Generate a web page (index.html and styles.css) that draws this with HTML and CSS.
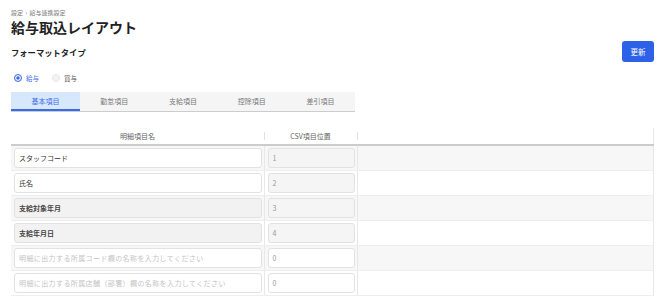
FILE: index.html
```html
<!DOCTYPE html>
<html lang="ja">
<head>
    <meta charset="UTF-8">
    <meta name="viewport" content="width=device-width, initial-scale=1.0">
    <title>給与取込レイアウト</title>
    <link rel="stylesheet" href="styles.css">
</head>
<body>
    <div class="page">
        <!-- Breadcrumb -->
        <div class="breadcrumb">設定 <span class="sep">›</span> 給与連携設定</div>
        <h1 class="page-title">給与取込レイアウト</h1>

        <div class="section-head">
            <h2>フォーマットタイプ</h2>
            <button class="btn-primary">更新</button>
        </div>

        <!-- Format type -->
        <div class="radios">
            <label class="radio checked"><span class="dot"></span>給与</label>
            <label class="radio disabled"><span class="dot"></span>賞与</label>
        </div>

        <!-- Tabs -->
        <div class="tabs">
            <div class="tab active">基本項目</div>
            <div class="tab">勤怠項目</div>
            <div class="tab">支給項目</div>
            <div class="tab">控除項目</div>
            <div class="tab">差引項目</div>
        </div>

        <!-- Layout table -->
        <table class="layout-table">
            <thead>
                <tr>
                    <th class="col-name"><span>明細項目名</span></th>
                    <th class="col-pos"><span>CSV項目位置</span></th>
                    <th class="col-rest"></th>
                </tr>
            </thead>
            <tbody>
                <tr>
                    <td><div class="field">スタッフコード</div></td>
                    <td><div class="field readonly">1</div></td>
                    <td></td>
                </tr>
                <tr>
                    <td><div class="field">氏名</div></td>
                    <td><div class="field readonly">2</div></td>
                    <td></td>
                </tr>
                <tr>
                    <td><div class="field locked">支給対象年月</div></td>
                    <td><div class="field readonly">3</div></td>
                    <td></td>
                </tr>
                <tr>
                    <td><div class="field locked">支給年月日</div></td>
                    <td><div class="field readonly">4</div></td>
                    <td></td>
                </tr>
                <tr>
                    <td><div class="field placeholder">明細に出力する所属コード欄の名称を入力してください</div></td>
                    <td><div class="field num">0</div></td>
                    <td></td>
                </tr>
                <tr>
                    <td><div class="field placeholder">明細に出力する所属店舗（部署）欄の名称を入力してください</div></td>
                    <td><div class="field num">0</div></td>
                    <td></td>
                </tr>
            </tbody>
        </table>
    </div>
</body>
</html>
```

FILE: styles.css
```css
* {
    margin: 0;
    padding: 0;
    box-sizing: border-box;
}

body {
    font-family: "Noto Sans CJK JP", "Noto Sans", sans-serif;
    color: #333;
    background: #fff;
}

.page {
    padding: 8px 16px 0 11px;
}

/* Header */
.breadcrumb {
    font-size: 6px;
    color: #777;
    line-height: 9px;
}

.breadcrumb .sep {
    margin: 0 1px;
}

.page-title {
    font-size: 14px;
    font-weight: 700;
    color: #222;
    line-height: 18px;
    margin-top: 1px;
}

.section-head {
    display: flex;
    justify-content: space-between;
    align-items: center;
    margin-top: 5px;
}

.section-head h2 {
    font-size: 8.3px;
    font-weight: 700;
    color: #222;
}

.btn-primary {
    width: 32px;
    height: 21px;
    border: none;
    border-radius: 3px;
    background: #2d62e8;
    color: #fff;
    font-family: inherit;
    font-size: 7.5px;
}

/* Radios */
.radios {
    display: flex;
    gap: 13px;
    margin-top: 10px;
    padding-left: 3px;
    height: 12px;
    align-items: center;
}

.radio {
    display: flex;
    align-items: center;
    gap: 4px;
    font-size: 6.5px;
    color: #555;
}

.radio .dot {
    width: 8px;
    height: 8px;
    border-radius: 50%;
    border: 1px solid #e8e8e8;
    background: #f3f3f3;
}

.radio.checked {
    color: #3b6ce8;
}

.radio.checked .dot {
    border: 1.5px solid #3b6ce8;
    background: #fff;
    box-shadow: inset 0 0 0 1.2px #fff, inset 0 0 0 4px #3b6ce8;
}

/* Tabs */
.tabs {
    display: flex;
    width: 344px;
    margin-top: 8px;
    border-bottom: 1px solid #ccc;
}

.tab {
    flex: 1;
    height: 19px;
    line-height: 19px;
    text-align: center;
    font-size: 7px;
    color: #777;
    background: #f5f5f5;
}

.tab.active {
    background: #d8e8fc;
    color: #3b6ce8;
    border-bottom: 2px solid #3b6ce8;
    margin-bottom: -1px;
}

/* Table */
.layout-table {
    width: 643px;
    margin-top: 16px;
    border-collapse: collapse;
    font-size: 7px;
}

.layout-table th {
    height: 17px;
    font-weight: 400;
    color: #666;
    border-bottom: 2px solid #ccc;
    position: relative;
}

.layout-table th + th::before {
    content: "";
    position: absolute;
    left: 0;
    top: 4px;
    height: 8px;
    border-left: 1px solid #e2e2e2;
}

.layout-table th.col-rest {
    border-right: 1px solid #e8e8e8;
}

.col-name {
    width: 253px;
}

.col-pos {
    width: 93px;
}

.layout-table td {
    height: 25px;
    padding: 0 2px 0 3px;
    border-bottom: 1px solid #eee;
}

.layout-table td + td {
    border-left: 1px solid #e8e8e8;
}

.layout-table td:last-child {
    border-right: 1px solid #e8e8e8;
}

.layout-table tbody tr:nth-child(odd) {
    background: #f7f7f7;
}

.field {
    height: 20px;
    line-height: 18px;
    padding: 0 4px;
    border: 1px solid #e2e2e2;
    border-radius: 3px;
    background: #fff;
    color: #333;
    white-space: nowrap;
    overflow: hidden;
}

.field.locked {
    background: #f2f2f2;
    font-weight: 700;
    color: #444;
}

.field.readonly {
    background: #f5f5f5;
    color: #999;
}

.field.placeholder {
    color: #c4c4c4;
    letter-spacing: 0.4px;
}

.field.num {
    color: #999;
}
```
